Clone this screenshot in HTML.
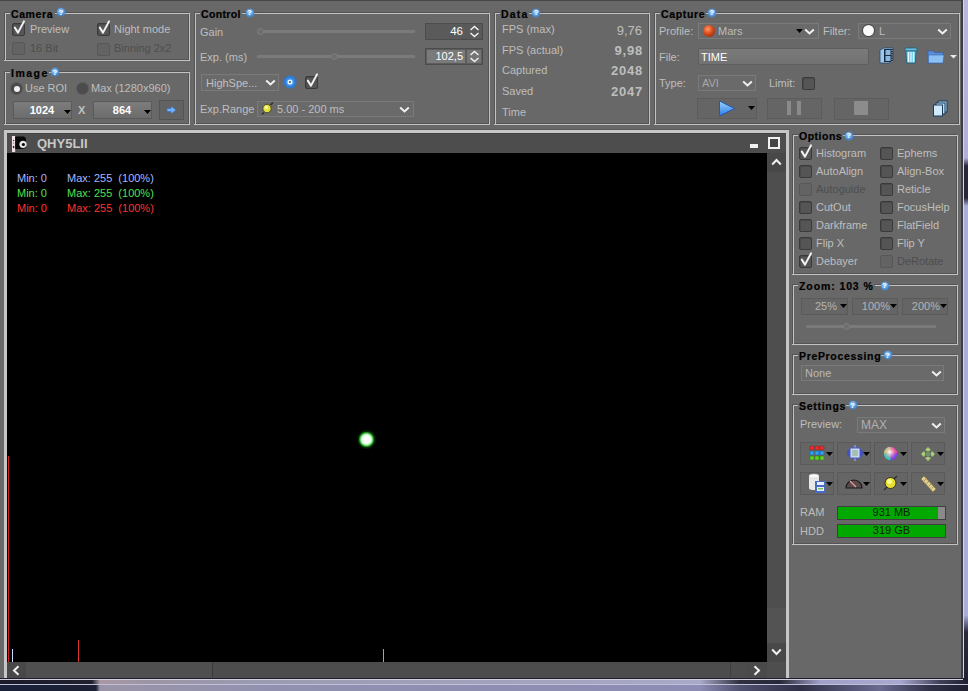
<!DOCTYPE html><html><head><meta charset='utf-8'><style>
*{margin:0;padding:0;box-sizing:border-box}
html,body{width:968px;height:691px;overflow:hidden;background:#686868}
body{position:relative;font-family:"Liberation Sans",sans-serif;font-size:11px;color:#c6c6c6}
body>div,body>svg{position:absolute}
.t{white-space:nowrap;line-height:13px;color:#bebebe}
.dt{white-space:nowrap;line-height:13px;color:#4e4e4e}
.tb{white-space:nowrap;line-height:13px;color:#000;font-weight:bold;font-size:10.5px;position:absolute;letter-spacing:0.8px;-webkit-text-stroke:0.2px #000}
.bg{background:#686868}
.gd{border:1px solid #545454}
.gl{border:1px solid #c2c2c2}
.hq{width:8px;height:8px;border-radius:50%;background:radial-gradient(circle at 45% 40%,#a8d8ff 0,#4a90d8 60%,#3a6aa8 100%);box-shadow:0 0 1.5px 0.5px rgba(80,140,210,0.6)}
.hq span{position:absolute;left:0;top:-1.5px;width:8px;text-align:center;font-size:8px;line-height:11px;font-weight:bold;color:#fff}
.cb{width:13px;height:13px;border:1px solid #3a3a3a;border-radius:2px;background:#555;box-shadow:inset 1px 1px 0 #4a4a4a}
.cb.dis{border-color:#575757;background:#636363;box-shadow:none}
.ck,.ab{position:absolute}
</style></head><body><div style="left:0px;top:0px;width:968px;height:1px;background:#464646"></div>
<div class="gd" style="left:4px;top:12px;width:185px;height:48px"></div>
<div class="gl" style="left:5px;top:13px;width:185px;height:48px"></div>
<div style="left:4px;top:60px;width:1px;height:1px;background:#c2c2c2"></div>
<div class="bg" style="left:10px;top:7px;width:45px;height:10px"></div>
<div class="tb" style="left:11px;top:8px;letter-spacing:0.6px">Camera</div>
<div class="hq" style="left:57px;top:8px"><span>?</span></div>
<div class="cb" style="left:12px;top:23px"></div>
<svg class="ck" style="left:12px;top:20px" width="14" height="16" viewBox="0 0 14 16"><path d="M2.8 7.6 L6 12.6 L12 1.4" fill="none" stroke="#f2f2f2" stroke-width="2" stroke-linecap="round" stroke-linejoin="round"/></svg>
<div class="t" style="left:30px;top:23px;">Preview</div>
<div class="cb" style="left:97px;top:23px"></div>
<svg class="ck" style="left:97px;top:20px" width="14" height="16" viewBox="0 0 14 16"><path d="M2.8 7.6 L6 12.6 L12 1.4" fill="none" stroke="#f2f2f2" stroke-width="2" stroke-linecap="round" stroke-linejoin="round"/></svg>
<div class="t" style="left:114px;top:23px;">Night mode</div>
<div class="cb dis" style="left:12px;top:42px"></div>
<div class="dt" style="left:30px;top:42px;">16 Bit</div>
<div class="cb dis" style="left:97px;top:43px"></div>
<div class="dt" style="left:114px;top:42px;">Binning 2x2</div>
<div class="gd" style="left:4px;top:71px;width:185px;height:53px"></div>
<div class="gl" style="left:5px;top:72px;width:185px;height:53px"></div>
<div style="left:4px;top:124px;width:1px;height:1px;background:#c2c2c2"></div>
<div class="bg" style="left:10px;top:66px;width:39px;height:10px"></div>
<div class="tb" style="left:11px;top:67px;letter-spacing:1.5px">Image</div>
<div class="hq" style="left:51px;top:68px"><span>?</span></div>
<div style="left:11px;top:83px;width:11px;height:11px;border-radius:50%;background:#4a4a4a;box-shadow:0 0 0 1px #5a5a5a"></div>
<div style="left:13.5px;top:85.5px;width:6px;height:6px;border-radius:50%;background:#f0f0f0"></div>
<div class="t" style="left:25px;top:82px;">Use ROI</div>
<div style="left:77px;top:83px;width:11px;height:11px;border-radius:50%;background:#4c4c4c;box-shadow:0 0 0 1px #5a5a5a"></div>
<div class="t" style="left:91px;top:82px;">Max (1280x960)</div>
<div style="left:13px;top:101px;width:59px;height:18px;background:linear-gradient(#7c7c7c,#6c6c6c);border:1px solid #5a5a5a"></div>
<div class="t" style="left:16px;top:104px;width:52px;text-align:center;color:#fff;font-weight:bold">1024</div>
<svg class="ab" style="left:64px;top:110px" width="7" height="4" viewBox="0 0 7 4"><path d="M0 0 H7 L3.5 4 Z" fill="#000"/></svg>
<div style="left:93px;top:101px;width:59px;height:18px;background:linear-gradient(#7c7c7c,#6c6c6c);border:1px solid #5a5a5a"></div>
<div class="t" style="left:96px;top:104px;width:52px;text-align:center;color:#fff;font-weight:bold">864</div>
<svg class="ab" style="left:144px;top:110px" width="7" height="4" viewBox="0 0 7 4"><path d="M0 0 H7 L3.5 4 Z" fill="#000"/></svg>
<div class="t" style="left:78px;top:104px;font-size:11px;font-weight:bold;color:#c0c0c0">X</div>
<div style="left:159px;top:100px;width:25px;height:20px;background:#626262;border:1px solid #545454"></div>
<svg class="ab" style="left:166px;top:105px" width="11" height="10" viewBox="0 0 11 10"><path d="M1 3.5 H5 V1 L10 5 L5 9 V6.5 H1 Z" fill="#6fb2ff" stroke="#3a6ab0" stroke-width="0.6"/></svg>
<div class="gd" style="left:194px;top:12px;width:295px;height:112px"></div>
<div class="gl" style="left:195px;top:13px;width:295px;height:112px"></div>
<div style="left:194px;top:124px;width:1px;height:1px;background:#c2c2c2"></div>
<div class="bg" style="left:200px;top:7px;width:42px;height:10px"></div>
<div class="tb" style="left:201px;top:8px;letter-spacing:0.33px">Control</div>
<div class="hq" style="left:245.5px;top:8.5px"><span>?</span></div>
<div class="t" style="left:200px;top:26px;">Gain</div>
<div class="t" style="left:200px;top:51px;">Exp. (ms)</div>
<div style="left:257px;top:30px;width:158px;height:3px;background:#7a7a7a;border-radius:1px"></div>
<div style="left:257.0px;top:28px;width:7px;height:7px;border-radius:50%;background:#6e6e6e;border:1px solid #7e7e7e"></div>
<div style="left:257px;top:55px;width:158px;height:3px;background:#7a7a7a;border-radius:1px"></div>
<div style="left:330.5px;top:53px;width:7px;height:7px;border-radius:50%;background:#6e6e6e;border:1px solid #7e7e7e"></div>
<div style="left:425px;top:23px;width:58px;height:17px;background:#5a5a5a;border:1px solid #4c4c4c"></div>
<div class="t" style="right:505px;top:25px;color:#fff;font-size:11.5px">46</div>
<div style="left:425px;top:48px;width:58px;height:17px;background:#5c5c5c;border:1px solid #4c4c4c"></div>
<div style="left:427px;top:50px;width:38px;height:13px;background:#7a7a7a"></div>
<div style="left:467px;top:50px;width:14px;height:13px;background:#747474"></div>
<div class="t" style="right:505px;top:50px;color:#fff;font-size:11px">102,5</div>
<svg class="ab" style="left:469px;top:25px" width="11" height="13" viewBox="0 0 11 13"><path d="M1.5 5 L5.5 1.5 L9.5 5 M1.5 8 L5.5 11.5 L9.5 8" fill="none" stroke="#f0f0f0" stroke-width="1.5"/></svg>
<svg class="ab" style="left:469px;top:50px" width="11" height="13" viewBox="0 0 11 13"><path d="M1.5 5 L5.5 1.5 L9.5 5 M1.5 8 L5.5 11.5 L9.5 8" fill="none" stroke="#f0f0f0" stroke-width="1.5"/></svg>
<div style="left:201px;top:74px;width:78px;height:17px;border:1px solid #7a7a7a;background:#6a6a6a"></div>
<div class="t" style="left:206px;top:77px;color:#c0c0c0">HighSpe...</div>
<svg class="ab" style="left:265px;top:79px" width="11" height="8" viewBox="0 0 11 8"><path d="M1.2 1.5 L5.5 5.5 L9.8 1.5" fill="none" stroke="#f0f0f0" stroke-width="2"/></svg>
<svg class="ab" style="left:283px;top:75px" width="14" height="14" viewBox="0 0 14 14"><circle cx="7" cy="7" r="6.5" fill="#2a7ad6"/><circle cx="7" cy="7" r="4.5" fill="#3c90e8"/><circle cx="7" cy="7" r="2.6" fill="#e8f4ff"/><circle cx="7" cy="7" r="1.1" fill="#2a6ab8"/></svg>
<div class="cb" style="left:305px;top:76px"></div>
<svg class="ck" style="left:305px;top:73px" width="14" height="16" viewBox="0 0 14 16"><path d="M2.8 7.6 L6 12.6 L12 1.4" fill="none" stroke="#f2f2f2" stroke-width="2" stroke-linecap="round" stroke-linejoin="round"/></svg>
<div class="t" style="left:200px;top:103px;">Exp.Range</div>
<div style="left:257px;top:101px;width:157px;height:16px;border:1px solid #7a7a7a;background:#6a6a6a"></div>
<svg class="ab" style="left:260px;top:101px" width="15" height="15" viewBox="0 0 15 15"><path d="M2 13.5 L4 11.5 M10.5 4 L13 1.5" stroke="#303030" stroke-width="1.6"/><circle cx="7" cy="7.5" r="4.2" fill="#e0e040" stroke="#4a4020" stroke-width="0.9"/><circle cx="6.2" cy="6.5" r="1.8" fill="#f8f8a0"/></svg>
<div class="t" style="left:277px;top:103px;">5.00 - 200 ms</div>
<svg class="ab" style="left:399px;top:106px" width="11" height="8" viewBox="0 0 11 8"><path d="M1.2 1.5 L5.5 5.5 L9.8 1.5" fill="none" stroke="#f0f0f0" stroke-width="2"/></svg>
<div class="gd" style="left:494px;top:12px;width:155px;height:112px"></div>
<div class="gl" style="left:495px;top:13px;width:155px;height:112px"></div>
<div style="left:494px;top:124px;width:1px;height:1px;background:#c2c2c2"></div>
<div class="bg" style="left:500px;top:7px;width:29px;height:10px"></div>
<div class="tb" style="left:501px;top:8px;letter-spacing:1.17px">Data</div>
<div class="hq" style="left:532.25px;top:8.5px"><span>?</span></div>
<div class="t" style="left:502px;top:23px;">FPS (max)</div>
<div class="t" style="left:502px;top:44px;">FPS (actual)</div>
<div class="t" style="left:502px;top:64px;">Captured</div>
<div class="t" style="left:502px;top:85px;">Saved</div>
<div class="t" style="left:502px;top:106px;">Time</div>
<div class="t" style="right:326px;top:24px;font-size:13px">9,76</div>
<div class="t" style="right:325px;top:44px;font-size:13px;font-weight:bold;letter-spacing:0.8px">9,98</div>
<div class="t" style="right:325px;top:64px;font-size:13px;font-weight:bold;letter-spacing:0.8px">2048</div>
<div class="t" style="right:325px;top:85px;font-size:13px;font-weight:bold;letter-spacing:0.8px">2047</div>
<div class="gd" style="left:654px;top:12px;width:305px;height:112px"></div>
<div class="gl" style="left:655px;top:13px;width:305px;height:112px"></div>
<div style="left:654px;top:124px;width:1px;height:1px;background:#c2c2c2"></div>
<div class="bg" style="left:660px;top:7px;width:46px;height:10px"></div>
<div class="tb" style="left:661px;top:8px;letter-spacing:0.67px">Capture</div>
<div class="hq" style="left:708px;top:8.5px"><span>?</span></div>
<div class="t" style="left:659px;top:25px;">Profile:</div>
<div style="left:698px;top:23px;width:121px;height:16px;border:1px solid #7a7a7a;background:#6a6a6a"></div>
<div style="left:702.5px;top:24.5px;width:12.5px;height:12.5px;border-radius:50%;background:radial-gradient(circle at 40% 35%,#ff9a6a 0,#d84a1a 45%,#7a2000 100%)"></div>
<div class="t" style="left:718px;top:25px;color:#bcbcbc">Mars</div>
<svg class="ab" style="left:796px;top:29px" width="7" height="4" viewBox="0 0 7 4"><path d="M0 0 H7 L3.5 4 Z" fill="#000"/></svg>
<svg class="ab" style="left:804px;top:28px" width="11" height="8" viewBox="0 0 11 8"><path d="M1.2 1.5 L5.5 5.5 L9.8 1.5" fill="none" stroke="#f0f0f0" stroke-width="2"/></svg>
<div class="t" style="left:823px;top:25px;">Filter:</div>
<div style="left:858px;top:23px;width:93px;height:16px;border:1px solid #7a7a7a;background:#6a6a6a"></div>
<div style="left:863px;top:25px;width:11px;height:11px;border-radius:50%;background:#fafafa;box-shadow:0 0 0 1px #444"></div>
<div class="t" style="left:879px;top:25px;color:#bcbcbc">L</div>
<svg class="ab" style="left:937px;top:28px" width="11" height="8" viewBox="0 0 11 8"><path d="M1.2 1.5 L5.5 5.5 L9.8 1.5" fill="none" stroke="#f0f0f0" stroke-width="2"/></svg>
<div class="t" style="left:659px;top:51px;">File:</div>
<div style="left:698px;top:48px;width:171px;height:17px;border:1px solid #5e5e5e;border-radius:2px;background:linear-gradient(#7a7a7a,#727272)"></div>
<div class="t" style="left:701px;top:51px;color:#fff">TIME</div>
<div class="t" style="left:659px;top:77px;">Type:</div>
<div style="left:698px;top:75px;width:58px;height:16px;border:1px solid #7a7a7a;background:#6a6a6a"></div>
<div class="t" style="left:702px;top:77px;color:#a8a8a8">AVI</div>
<svg class="ab" style="left:742px;top:80px" width="11" height="8" viewBox="0 0 11 8"><path d="M1.2 1.5 L5.5 5.5 L9.8 1.5" fill="none" stroke="#f0f0f0" stroke-width="2"/></svg>
<div class="t" style="left:769px;top:77px;">Limit:</div>
<div class="cb" style="left:802px;top:77px"></div>
<div style="left:697px;top:98px;width:60px;height:21px;border:1px solid #5c5c5c;background:#656565"></div>
<svg class="ab" style="left:718px;top:100px" width="18" height="17" viewBox="0 0 18 17"><defs><linearGradient id="pg" x1="0" y1="0" x2="0" y2="1"><stop offset="0" stop-color="#9cd4ff"/><stop offset="1" stop-color="#2a7ae8"/></linearGradient></defs><path d="M1.5 1 L16.5 8.5 L1.5 16 Z" fill="url(#pg)" stroke="#2058b0" stroke-width="1"/></svg>
<svg class="ab" style="left:748px;top:106px" width="7" height="4" viewBox="0 0 7 4"><path d="M0 0 H7 L3.5 4 Z" fill="#000"/></svg>
<div style="left:767px;top:98px;width:55px;height:21px;border:1px solid #5c5c5c;background:#656565"></div>
<div style="left:787px;top:101px;width:4px;height:14px;background:#8a8a8a"></div>
<div style="left:797px;top:101px;width:4px;height:14px;background:#8a8a8a"></div>
<div style="left:834px;top:98px;width:55px;height:22px;border:1px solid #5c5c5c;background:#656565"></div>
<div style="left:854px;top:101px;width:14px;height:14px;background:#8c8c8c;border-radius:1px"></div>
<svg class="ab" style="left:932px;top:100px" width="17" height="17" viewBox="0 0 17 17"><rect x="6" y="1" width="9" height="11" fill="#a8d4f0" stroke="#1c3a5a" stroke-width="1"/><rect x="4" y="3" width="9" height="11" fill="#b8e0f8" stroke="#1c3a5a" stroke-width="1"/><rect x="1.5" y="5" width="9" height="11" fill="#cfeafc" stroke="#1c3a5a" stroke-width="1"/></svg>
<svg class="ab" style="left:879px;top:47px" width="16" height="17" viewBox="0 0 16 17"><path d="M1 3 L5 1 H14 V14 L10 16 H1 Z" fill="#9cc8ec" stroke="#28486a" stroke-width="0.8"/><rect x="5" y="2" width="9" height="13" fill="#1a2a40"/><rect x="6.5" y="3" width="5" height="5" fill="#8ab8e0"/><rect x="6.5" y="9" width="5" height="5" fill="#8ab8e0"/><path d="M13 3 V15" stroke="#ddd" stroke-width="1" stroke-dasharray="1 1.2"/></svg>
<svg class="ab" style="left:904px;top:47px" width="14" height="17" viewBox="0 0 14 17"><rect x="1" y="1" width="12" height="3" rx="1" fill="#6cc0e0" stroke="#1a5a7a" stroke-width="0.8"/><path d="M2 4 H12 L11.3 16 H2.7 Z" fill="#7cd0ec" stroke="#1a5a7a" stroke-width="0.8"/><path d="M4.5 5 V15 M7 5 V15 M9.5 5 V15" stroke="#e8f8ff" stroke-width="1"/></svg>
<svg class="ab" style="left:927px;top:49px" width="18" height="15" viewBox="0 0 18 15"><path d="M1 2 H6 L7.5 3.5 H16 V14 H1 Z" fill="#5a8ed8" stroke="#3a64a8" stroke-width="0.8"/><path d="M1.5 6 H17 L16 14 H1.5 Z" fill="#8cc0f4" stroke="#3a64a8" stroke-width="0.6"/></svg>
<svg class="ab" style="left:950px;top:55px" width="7" height="3.5" viewBox="0 0 7 3.5"><path d="M0 0 H7 L3.5 3.5 Z" fill="#e8e8e8"/></svg>
<div style="left:3px;top:129px;width:787px;height:1px;background:#5a5a5a"></div>
<div style="left:4px;top:130px;width:785px;height:549px;background:#c6c6c6"></div>
<div style="left:7px;top:133px;width:779px;height:20px;background:#4d4d4d;border-top:1px solid #424242"></div>
<div style="left:7px;top:153px;width:760px;height:509px;background:#000"></div>
<svg class="ab" style="left:11px;top:135px" width="18" height="18" viewBox="0 0 18 18"><rect x="1" y="1" width="3.2" height="16" fill="#f0e0e8"/><circle cx="2.6" cy="5.5" r="0.7" fill="#444"/><circle cx="2.6" cy="8" r="0.6" fill="#666"/><ellipse cx="2.6" cy="12" rx="0.8" ry="1.2" fill="#222"/><path d="M4.2 1.5 H13 L15 3.5 V13 L11 14 H4.2 Z" fill="#060606"/><circle cx="12" cy="9.3" r="3.6" fill="#e4e4e4"/><circle cx="12.4" cy="9.5" r="1.6" fill="#0a0a0a"/></svg>
<div style="left:37px;top:136px;font-size:13px;line-height:15px;color:#c8c8c8;font-weight:bold;white-space:nowrap">QHY5LII</div>
<div style="left:750px;top:144px;width:8px;height:4px;background:#f0f0f0"></div>
<div style="left:768px;top:137px;width:12px;height:12px;border:2px solid #f0f0f0;background:#454545"></div>
<div class="t" style="left:17px;top:172px;color:#a8b8ff">Min: 0</div>
<div class="t" style="left:67px;top:172px;color:#a8b8ff">Max: 255&nbsp; (100%)</div>
<div class="t" style="left:17px;top:187px;color:#50e050">Min: 0</div>
<div class="t" style="left:67px;top:187px;color:#50e050">Max: 255&nbsp; (100%)</div>
<div class="t" style="left:17px;top:202px;color:#ff3030">Min: 0</div>
<div class="t" style="left:67px;top:202px;color:#ff3030">Max: 255&nbsp; (100%)</div>
<div style="left:356px;top:429px;width:21px;height:21px;border-radius:50%;background:radial-gradient(circle,#fff 0,#f8fff8 4px,#c8ffc8 5px,#40c040 6.5px,rgba(0,80,0,0.6) 8px,rgba(0,0,0,0) 10px)"></div>
<div style="left:8px;top:456px;width:1px;height:206px;background:#d02020"></div>
<div style="left:12px;top:649px;width:1px;height:13px;background:#c8d8ff"></div>
<div style="left:78px;top:640px;width:1px;height:22px;background:#e03030"></div>
<div style="left:383px;top:649px;width:1px;height:13px;background:#50e050"></div>
<div style="left:767px;top:153px;width:19px;height:509px;background:#4e4e4e"></div>
<div style="left:767px;top:153px;width:19px;height:19px;background:#484848"></div>
<div style="left:767px;top:608px;width:19px;height:35px;background:#535353"></div>
<div style="left:767px;top:643px;width:19px;height:19px;background:#484848"></div>
<svg class="ab" style="left:771px;top:158px" width="11" height="8" viewBox="0 0 11 8"><path d="M1.2 6.5 L5.5 2 L9.8 6.5" fill="none" stroke="#f0f0f0" stroke-width="2"/></svg>
<svg class="ab" style="left:771px;top:648px" width="11" height="8" viewBox="0 0 11 8"><path d="M1.2 1.5 L5.5 6 L9.8 1.5" fill="none" stroke="#f0f0f0" stroke-width="2"/></svg>
<div style="left:7px;top:662px;width:779px;height:16px;background:#4c4c4c"></div>
<div style="left:7px;top:662px;width:19px;height:16px;background:#484848"></div>
<div style="left:26px;top:662px;width:186px;height:16px;background:#4f4f4f"></div>
<div style="left:212px;top:662px;width:1px;height:15px;background:#3a3a3a"></div>
<div style="left:730px;top:662px;width:1px;height:15px;background:#3e3e3e"></div>
<div style="left:747px;top:662px;width:20px;height:16px;background:#4a4a4a"></div>
<svg class="ab" style="left:12px;top:665px" width="8" height="11" viewBox="0 0 8 11"><path d="M6.5 1.2 L2 5.5 L6.5 9.8" fill="none" stroke="#f0f0f0" stroke-width="2"/></svg>
<svg class="ab" style="left:753px;top:665px" width="8" height="11" viewBox="0 0 8 11"><path d="M1.5 1.2 L6 5.5 L1.5 9.8" fill="none" stroke="#f0f0f0" stroke-width="2"/></svg>
<div style="left:767px;top:662px;width:19px;height:16px;background:#4e4e4e"></div>
<div class="gd" style="left:792px;top:134px;width:165px;height:140px"></div>
<div class="gl" style="left:793px;top:135px;width:165px;height:140px"></div>
<div style="left:792px;top:274px;width:1px;height:1px;background:#c2c2c2"></div>
<div class="bg" style="left:798px;top:129px;width:45px;height:10px"></div>
<div class="tb" style="left:799px;top:130px;letter-spacing:0.5px">Options</div>
<div class="hq" style="left:844.75px;top:131.5px"><span>?</span></div>
<div class="cb" style="left:799px;top:147px"></div>
<svg class="ck" style="left:799px;top:144px" width="14" height="16" viewBox="0 0 14 16"><path d="M2.8 7.6 L6 12.6 L12 1.4" fill="none" stroke="#f2f2f2" stroke-width="2" stroke-linecap="round" stroke-linejoin="round"/></svg>
<div class="t" style="left:816px;top:147px;">Histogram</div>
<div class="cb" style="left:880px;top:147px"></div>
<div class="t" style="left:897px;top:147px;">Ephems</div>
<div class="cb" style="left:799px;top:165px"></div>
<div class="t" style="left:816px;top:165px;">AutoAlign</div>
<div class="cb" style="left:880px;top:165px"></div>
<div class="t" style="left:897px;top:165px;">Align-Box</div>
<div class="cb dis" style="left:799px;top:183px"></div>
<div class="dt" style="left:816px;top:183px;">Autoguide</div>
<div class="cb" style="left:880px;top:183px"></div>
<div class="t" style="left:897px;top:183px;">Reticle</div>
<div class="cb" style="left:799px;top:201px"></div>
<div class="t" style="left:816px;top:201px;">CutOut</div>
<div class="cb" style="left:880px;top:201px"></div>
<div class="t" style="left:897px;top:201px;">FocusHelp</div>
<div class="cb" style="left:799px;top:219px"></div>
<div class="t" style="left:816px;top:219px;">Darkframe</div>
<div class="cb" style="left:880px;top:219px"></div>
<div class="t" style="left:897px;top:219px;">FlatField</div>
<div class="cb" style="left:799px;top:237px"></div>
<div class="t" style="left:816px;top:237px;">Flip X</div>
<div class="cb" style="left:880px;top:237px"></div>
<div class="t" style="left:897px;top:237px;">Flip Y</div>
<div class="cb" style="left:799px;top:255px"></div>
<svg class="ck" style="left:799px;top:252px" width="14" height="16" viewBox="0 0 14 16"><path d="M2.8 7.6 L6 12.6 L12 1.4" fill="none" stroke="#f2f2f2" stroke-width="2" stroke-linecap="round" stroke-linejoin="round"/></svg>
<div class="t" style="left:816px;top:255px;">Debayer</div>
<div class="cb dis" style="left:880px;top:255px"></div>
<div class="dt" style="left:897px;top:255px;">DeRotate</div>
<div class="gd" style="left:792px;top:284px;width:165px;height:60px"></div>
<div class="gl" style="left:793px;top:285px;width:165px;height:60px"></div>
<div style="left:792px;top:344px;width:1px;height:1px;background:#c2c2c2"></div>
<div class="bg" style="left:798px;top:279px;width:77px;height:10px"></div>
<div class="tb" style="left:799px;top:280px;letter-spacing:0.9px">Zoom: 103 %</div>
<div class="hq" style="left:880.5px;top:281.5px"><span>?</span></div>
<div style="left:801px;top:298px;width:47px;height:17px;border:1px solid #5a5a5a;background:#656565"></div>
<div class="t" style="right:131px;top:300px;color:#b4b4b4">25%</div>
<svg class="ab" style="left:840px;top:304px" width="7" height="4" viewBox="0 0 7 4"><path d="M0 0 H7 L3.5 4 Z" fill="#000"/></svg>
<div style="left:852px;top:298px;width:46px;height:17px;border:1px solid #5a5a5a;background:#656565"></div>
<div class="t" style="right:78px;top:300px;color:#b4b4b4">100%</div>
<svg class="ab" style="left:890px;top:304px" width="7" height="4" viewBox="0 0 7 4"><path d="M0 0 H7 L3.5 4 Z" fill="#000"/></svg>
<div style="left:902px;top:298px;width:46px;height:17px;border:1px solid #5a5a5a;background:#656565"></div>
<div class="t" style="right:28px;top:300px;color:#b4b4b4">200%</div>
<svg class="ab" style="left:940px;top:304px" width="7" height="4" viewBox="0 0 7 4"><path d="M0 0 H7 L3.5 4 Z" fill="#000"/></svg>
<div style="left:806px;top:324.5px;width:130px;height:3px;background:#7a7a7a;border-radius:1px"></div>
<div style="left:842.5px;top:322.5px;width:7px;height:7px;border-radius:50%;background:#6e6e6e;border:1px solid #7e7e7e"></div>
<div class="gd" style="left:792px;top:354px;width:165px;height:40px"></div>
<div class="gl" style="left:793px;top:355px;width:165px;height:40px"></div>
<div style="left:792px;top:394px;width:1px;height:1px;background:#c2c2c2"></div>
<div class="bg" style="left:798px;top:349px;width:83px;height:10px"></div>
<div class="tb" style="left:799px;top:350px;letter-spacing:0.67px">PreProcessing</div>
<div class="hq" style="left:883.5px;top:351px"><span>?</span></div>
<div style="left:801px;top:365px;width:143px;height:16px;border:1px solid #7a7a7a;background:#6a6a6a"></div>
<div class="t" style="left:805px;top:367px;color:#b8b8b8">None</div>
<svg class="ab" style="left:931px;top:370px" width="11" height="8" viewBox="0 0 11 8"><path d="M1.2 1.5 L5.5 5.5 L9.8 1.5" fill="none" stroke="#f0f0f0" stroke-width="2"/></svg>
<div class="gd" style="left:792px;top:404px;width:165px;height:140px"></div>
<div class="gl" style="left:793px;top:405px;width:165px;height:140px"></div>
<div style="left:792px;top:544px;width:1px;height:1px;background:#c2c2c2"></div>
<div class="bg" style="left:798px;top:399px;width:48px;height:10px"></div>
<div class="tb" style="left:799px;top:400px;letter-spacing:0.71px">Settings</div>
<div class="hq" style="left:848.5px;top:401px"><span>?</span></div>
<div class="t" style="left:800px;top:418px;">Preview:</div>
<div style="left:857px;top:417px;width:88px;height:16px;border:1px solid #7a7a7a;background:#6a6a6a"></div>
<div class="t" style="left:861px;top:419px;color:#b0b0b0;font-size:12px">MAX</div>
<svg class="ab" style="left:931px;top:422px" width="11" height="8" viewBox="0 0 11 8"><path d="M1.2 1.5 L5.5 5.5 L9.8 1.5" fill="none" stroke="#f0f0f0" stroke-width="2"/></svg>
<div style="left:800px;top:442px;width:34px;height:23px;border:1px solid #5a5a5a;background:#656565"></div>
<svg class="ab" style="left:826px;top:452px" width="7" height="4" viewBox="0 0 7 4"><path d="M0 0 H7 L3.5 4 Z" fill="#000"/></svg>
<div style="left:837px;top:442px;width:34px;height:23px;border:1px solid #5a5a5a;background:#656565"></div>
<svg class="ab" style="left:863px;top:452px" width="7" height="4" viewBox="0 0 7 4"><path d="M0 0 H7 L3.5 4 Z" fill="#000"/></svg>
<div style="left:874px;top:442px;width:34px;height:23px;border:1px solid #5a5a5a;background:#656565"></div>
<svg class="ab" style="left:900px;top:452px" width="7" height="4" viewBox="0 0 7 4"><path d="M0 0 H7 L3.5 4 Z" fill="#000"/></svg>
<div style="left:911px;top:442px;width:34px;height:23px;border:1px solid #5a5a5a;background:#656565"></div>
<svg class="ab" style="left:937px;top:452px" width="7" height="4" viewBox="0 0 7 4"><path d="M0 0 H7 L3.5 4 Z" fill="#000"/></svg>
<div style="left:800px;top:472px;width:34px;height:23px;border:1px solid #5a5a5a;background:#656565"></div>
<svg class="ab" style="left:826px;top:482px" width="7" height="4" viewBox="0 0 7 4"><path d="M0 0 H7 L3.5 4 Z" fill="#000"/></svg>
<div style="left:837px;top:472px;width:34px;height:23px;border:1px solid #5a5a5a;background:#656565"></div>
<svg class="ab" style="left:863px;top:482px" width="7" height="4" viewBox="0 0 7 4"><path d="M0 0 H7 L3.5 4 Z" fill="#000"/></svg>
<div style="left:874px;top:472px;width:34px;height:23px;border:1px solid #5a5a5a;background:#656565"></div>
<svg class="ab" style="left:900px;top:482px" width="7" height="4" viewBox="0 0 7 4"><path d="M0 0 H7 L3.5 4 Z" fill="#000"/></svg>
<div style="left:911px;top:472px;width:34px;height:23px;border:1px solid #5a5a5a;background:#656565"></div>
<svg class="ab" style="left:937px;top:482px" width="7" height="4" viewBox="0 0 7 4"><path d="M0 0 H7 L3.5 4 Z" fill="#000"/></svg>
<svg class="ab" style="left:809px;top:445px" width="16" height="16" viewBox="0 0 16 16"><rect x="1" y="1" width="4" height="4" rx="1" fill="#e83030" stroke="#901010" stroke-width="0.5"/><rect x="6" y="1" width="4" height="4" rx="1" fill="#e83030" stroke="#901010" stroke-width="0.5"/><rect x="11" y="1" width="4" height="4" rx="1" fill="#e83030" stroke="#901010" stroke-width="0.5"/><rect x="1" y="6" width="4" height="4" rx="1" fill="#30a0f0" stroke="#1060a0" stroke-width="0.5"/><rect x="6" y="6" width="4" height="4" rx="1" fill="#30a0f0" stroke="#1060a0" stroke-width="0.5"/><rect x="11" y="6" width="4" height="4" rx="1" fill="#30a0f0" stroke="#1060a0" stroke-width="0.5"/><rect x="1" y="11" width="4" height="4" rx="1" fill="#60d020" stroke="#308010" stroke-width="0.5"/><rect x="6" y="11" width="4" height="4" rx="1" fill="#60d020" stroke="#308010" stroke-width="0.5"/><rect x="11" y="11" width="4" height="4" rx="1" fill="#60d020" stroke="#308010" stroke-width="0.5"/></svg>
<svg class="ab" style="left:846px;top:444px" width="18" height="18" viewBox="0 0 18 18"><rect x="8" y="1" width="2" height="3" fill="#7a8ad8"/><rect x="8" y="14" width="2" height="3" fill="#7a8ad8"/><ellipse cx="3.5" cy="9" rx="2.5" ry="3.5" fill="#4050c0"/><ellipse cx="14.5" cy="9" rx="2.5" ry="3.5" fill="#4050c0"/><rect x="4" y="4" width="10" height="10" fill="#c8d8f0" stroke="#4a5ac8" stroke-width="1"/><rect x="6" y="6" width="6" height="6" fill="#90b090" opacity="0.6"/></svg>
<svg class="ab" style="left:883px;top:446px" width="15" height="15" viewBox="0 0 15 15"><defs><radialGradient id="cw" cx="0.45" cy="0.4" r="0.6"><stop offset="0" stop-color="#fff"/><stop offset="0.5" stop-color="#f0a0c0" stop-opacity="0.6"/><stop offset="1" stop-color="#a040c0" stop-opacity="0"/></radialGradient></defs><circle cx="7.5" cy="7.5" r="6.8" fill="#3040e0"/><path d="M7.5 7.5 L7.5 0.7 A6.8 6.8 0 0 1 14.3 7.5 Z" fill="#f04080"/><path d="M7.5 7.5 L14.3 7.5 A6.8 6.8 0 0 1 7.5 14.3 Z" fill="#8040f0"/><path d="M7.5 7.5 L7.5 14.3 A6.8 6.8 0 0 1 0.7 7.5 Z" fill="#20e0a0"/><path d="M7.5 7.5 L0.7 7.5 A6.8 6.8 0 0 1 7.5 0.7 Z" fill="#a0f040"/><circle cx="7.5" cy="7.5" r="6.8" fill="url(#cw)"/></svg>
<svg class="ab" style="left:920px;top:446px" width="16" height="16" viewBox="0 0 16 16"><path d="M8 1 L11 4 L8 5.5 L5 4 Z M15 8 L12 11 L10.5 8 L12 5 Z M8 15 L5 12 L8 10.5 L11 12 Z M1 8 L4 5 L5.5 8 L4 11 Z" fill="#a8d070"/><rect x="6" y="6" width="4" height="4" fill="#70906a"/></svg>
<svg class="ab" style="left:807px;top:473px" width="20" height="21" viewBox="0 0 20 21"><path d="M2 3 V15 A5 2 0 0 0 12 15 V3 Z" fill="#e8e8e8"/><ellipse cx="7" cy="3" rx="5" ry="2" fill="#fafafa" stroke="#ccc" stroke-width="0.5"/><rect x="8" y="8" width="11" height="12" fill="#4a6ac8"/><rect x="10" y="9" width="7" height="3" fill="#e8f0ff"/><rect x="10" y="14" width="7" height="4" fill="#e8f0ff"/><rect x="11" y="15" width="5" height="1.5" fill="#80c040"/></svg>
<svg class="ab" style="left:845px;top:476px" width="18" height="13" viewBox="0 0 18 13"><path d="M1 12 A8 8 0 0 1 17 12 Z" fill="#5a4a4a" stroke="#1a1a1a" stroke-width="1.2"/><path d="M5 5 L11 11" stroke="#e0a0a0" stroke-width="1.2"/></svg>
<svg class="ab" style="left:882px;top:475px" width="17" height="17" viewBox="0 0 17 17"><circle cx="8.5" cy="8" r="5.5" fill="#e8e030" stroke="#3a3020" stroke-width="1"/><circle cx="7.5" cy="6.5" r="2.5" fill="#fafa90"/><path d="M2 15 L5 12 M12 4 L15 1" stroke="#303038" stroke-width="1.5"/></svg>
<svg class="ab" style="left:919px;top:475px" width="18" height="18" viewBox="0 0 18 18"><path d="M2 4 L5 1 L17 14 L14 17 Z" fill="#e0d090" stroke="#8a7030" stroke-width="0.6"/><path d="M5 6 L8 3 M7.5 8.5 L10.5 5.5 M10 11 L13 8 M12.5 13.5 L15.5 10.5" stroke="#9a8040" stroke-width="0.8"/></svg>
<div class="t" style="left:800px;top:506px;">RAM</div>
<div class="t" style="left:800px;top:525px;">HDD</div>
<div style="left:837px;top:506px;width:109px;height:14px;border:1px solid #3e3e3e;background:#8a8a8a"></div>
<div style="left:838px;top:507px;width:100px;height:12px;background:#00a800"></div>
<div class="t" style="left:838px;top:506px;width:107px;text-align:center;color:#102010">931 MB</div>
<div style="left:837px;top:524px;width:109px;height:14px;border:1px solid #3e3e3e;background:#00a800"></div>
<div class="t" style="left:838px;top:524px;width:107px;text-align:center;color:#102010">319 GB</div>
<div style="left:961px;top:0px;width:2px;height:679px;background:#3c3c4a"></div>
<div style="left:963px;top:0px;width:5px;height:691px;background:linear-gradient(#b8b8dc 0,#b0b0d8 158px,#282838 166px,#282838 198px,#a8b0d8 206px,#a8b0d8 615px,#2a2a3a 632px,#202030 100%)"></div>
<div style="left:963px;top:0px;width:1px;height:680px;background:#d4d4e6"></div>
<div style="left:0px;top:678px;width:968px;height:13px;background:#1e1e2c"></div>
<div style="left:0px;top:680px;width:968px;height:4px;background:linear-gradient(90deg,#1a1a28 0,#202030 92px,#a898a4 100px,#9c94a4 150px,#9a9ab0 250px,#a8a8c8 700px,#303040 740px,#282838 780px,#a0a0c8 820px,#a8a8d0 900px,#404058 940px,#202030 968px)"></div>
<div style="left:0px;top:685px;width:968px;height:6px;background:linear-gradient(90deg,#182038 0,#1c2034 96px,#9a94a8 100px,#9090b0 300px,#8c8cb4 700px,#505070 740px,#303048 800px,#6a6a90 880px,#303048 930px,#202030 968px)"></div>
<div style="left:0px;top:679px;width:963px;height:1px;background:#d0d0e0"></div>
<div style="left:0px;top:684px;width:968px;height:1px;background:#c0c0d8"></div></body></html>
